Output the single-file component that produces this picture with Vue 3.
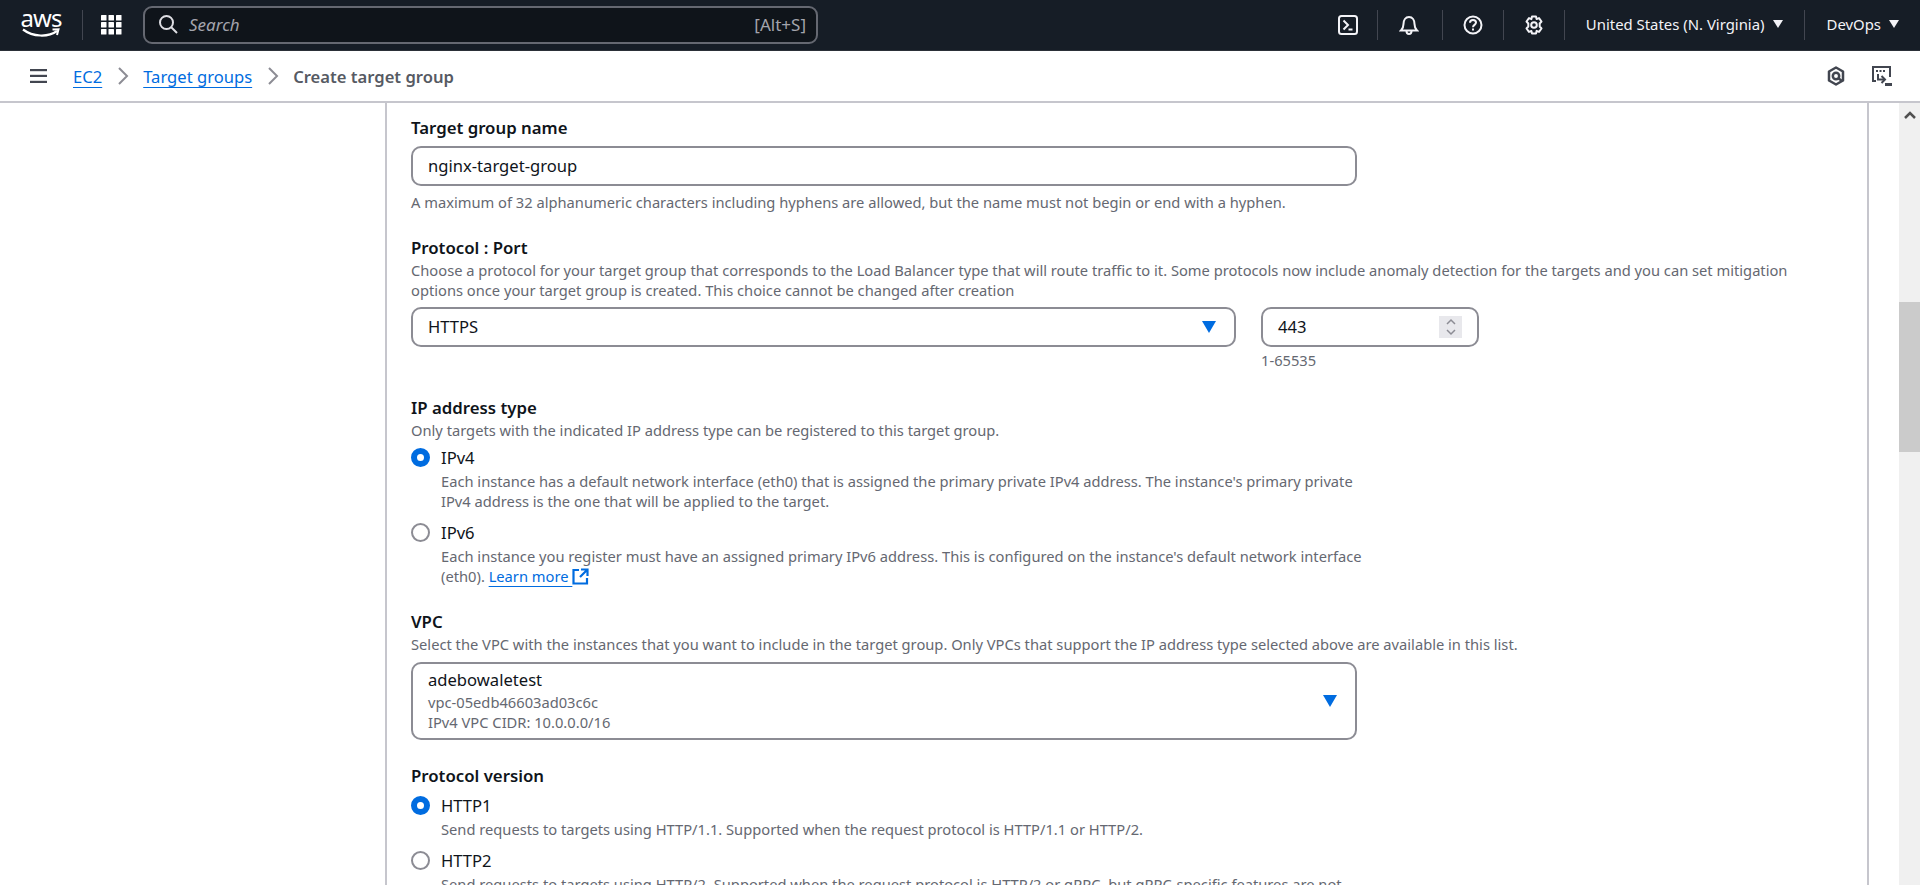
<template>
  <div class="page">
    <header class="topbar">
      <div class="logo">
        <span class="logo-text">aws</span>
        <svg class="smile" width="38" height="10" viewBox="0 0 38 10"><path d="M1 1.500C11 9 26 9.500 35 3" fill="none" stroke="#fff" stroke-width="2.200"/><path d="M30.500 1.500L36.500 1.200L35 7" fill="none" stroke="#fff" stroke-width="2"/></svg>
      </div>
      <span class="sep logo-sep"></span>
      <svg class="grid-icon" width="21" height="20" viewBox="0 0 21 20" fill="#fff">
        <template v-for="y in [0, 7, 14]" :key="y">
          <rect v-for="x in [0, 7.5, 15]" :key="x" :x="x" :y="y" width="5.500" height="5.500" rx=".5" />
        </template>
      </svg>
      <div class="search">
        <svg width="20" height="20" viewBox="0 0 20 20" fill="none" stroke="#dedee3" stroke-width="2"><circle cx="8.500" cy="8.500" r="6.500"/><path d="M13 13l6 6"/></svg>
        <span class="search-ph">Search</span>
        <span class="search-key">[Alt+S]</span>
      </div>
      <div class="top-right">
        <svg class="ti" width="20" height="20" viewBox="0 0 20 20" fill="none" stroke="#f3f3f7" stroke-width="2"><rect x="1" y="1" width="18" height="18" rx="2.500"/><path d="M5.500 5.500l4.500 4.500-4.500 4.500M10.500 14.500h4"/></svg>
        <span class="sep sep-first"></span>
        <svg class="ti" width="20" height="20" viewBox="0 0 20 20" fill="none" stroke="#f3f3f7" stroke-width="2"><path d="M2 15.500h16c-2-2-2.500-3.500-2.500-6.500 0-4-2-7-5.500-7S4.500 5 4.500 9c0 3-.5 4.500-2.500 6.500z"/><path d="M7.500 16c0 2 1 3 2.500 3s2.500-1 2.500-3"/></svg>
        <span class="sep sep-second"></span>
        <svg class="ti" width="20" height="20" viewBox="0 0 20 20" fill="none" stroke="#f3f3f7" stroke-width="2"><circle cx="10" cy="10" r="8.500"/><path d="M7 7.700C7 5.800 8.400 5 10 5s3 1 3 2.600c0 2.200-3 2.400-3 4.600"/><path d="M10 13.500v2"/></svg>
        <span class="sep"></span>
        <svg class="ti" width="20" height="20" viewBox="0 0 20 20" fill="none" stroke="#f3f3f7" stroke-width="2"><circle cx="10" cy="10" r="2.800"/><path d="M8 1.500h4l.6 2.600 2.400-1 2.500 3.400-1.800 2 0 3 1.800 2-2.500 3.400-2.400-1-.6 2.600H8l-.6-2.600-2.400 1-2.500-3.400 1.800-2 0-3-1.800-2L5 3.100l2.400 1z" stroke-linejoin="round"/></svg>
        <span class="sep"></span>
        <span class="menu">United States (N. Virginia)<i class="caret"></i></span>
        <span class="sep sep-last"></span>
        <span class="menu">DevOps<i class="caret"></i></span>
      </div>
    </header>

    <nav class="crumbs">
      <svg class="burger" width="17" height="14" viewBox="0 0 17 14" fill="#424650"><rect width="17" height="2.200"/><rect y="5.800" width="17" height="2.200"/><rect y="11.800" width="17" height="2.200"/></svg>
      <a class="link">EC2</a>
      <svg class="chev" width="12" height="18" viewBox="0 0 12 18" fill="none" stroke="#8c8c94" stroke-width="2"><path d="M2 1l8 8-8 8"/></svg>
      <a class="link">Target groups</a>
      <svg class="chev" width="12" height="18" viewBox="0 0 12 18" fill="none" stroke="#8c8c94" stroke-width="2"><path d="M2 1l8 8-8 8"/></svg>
      <span class="current">Create target group</span>
      <div class="crumb-tools">
        <svg width="18" height="20" viewBox="0 0 18 20" fill="none" stroke="#424650" stroke-width="2.500"><path d="M9 1.500l7 4v9l-7 4-7-4v-9z" stroke-linejoin="round"/><circle cx="9" cy="10" r="3.200"/><path d="M11 12l4 3"/></svg>
        <svg width="20" height="20" viewBox="0 0 20 20" fill="none" stroke="#424650" stroke-width="2"><path d="M4 15H1V1h17v10"/><path d="M4 5h2M7.500 5h2M11 5h2" stroke-width="2"/><path d="M6 8v5.500h6"/><path d="M9.500 10l3.500 3.500L9.500 17"/><path d="M13 18.500h7" stroke-width="3"/></svg>
      </div>
    </nav>

    <div class="body">
      <main class="scroller">
        <section class="panel">
          <div class="field name-field">
            <label class="lbl">Target group name</label>
            <div class="input wide">nginx-target-group</div>
            <p class="hint">A maximum of 32 alphanumeric characters including hyphens are allowed, but the name must not begin or end with a hyphen.</p>
          </div>

          <div class="field port-field">
            <label class="lbl">Protocol : Port</label>
            <p class="hint">Choose a protocol for your target group that corresponds to the Load Balancer type that will route traffic to it. Some protocols now include anomaly detection for the targets and you can set mitigation<br>options once your target group is created. This choice cannot be changed after creation</p>
            <div class="proto-row">
              <div class="input select proto">HTTPS<i class="blue-caret"></i></div>
              <div class="port-col">
                <div class="input port">443
                  <span class="spin"><svg width="10" height="18" viewBox="0 0 10 18" fill="none" stroke="#8c8c94" stroke-width="1.500"><path d="M1 6l4-4 4 4M1 12l4 4 4-4"/></svg></span>
                </div>
                <p class="hint range">1-65535</p>
              </div>
            </div>
          </div>

          <div class="field ip-field">
            <label class="lbl">IP address type</label>
            <p class="hint">Only targets with the indicated IP address type can be registered to this target group.</p>
            <div class="radio">
              <i class="dot on"></i>
              <div>
                <div class="radio-lbl">IPv4</div>
                <p class="hint">Each instance has a default network interface (eth0) that is assigned the primary private IPv4 address. The instance's primary private<br>IPv4 address is the one that will be applied to the target.</p>
              </div>
            </div>
            <div class="radio">
              <i class="dot"></i>
              <div>
                <div class="radio-lbl">IPv6</div>
                <p class="hint">Each instance you register must have an assigned primary IPv6 address. This is configured on the instance's default network interface<br>(eth0). <a class="link learn">Learn more <svg width="17" height="17" viewBox="0 0 17 17" fill="none" stroke="#006ce0" stroke-width="2.200"><path d="M7 2H1.500v13.500H15V10"/><path d="M9 1.500h6.500V8M15 2L8 9"/></svg></a></p>
              </div>
            </div>
          </div>

          <div class="field vpc-field">
            <label class="lbl">VPC</label>
            <p class="hint">Select the VPC with the instances that you want to include in the target group. Only VPCs that support the IP address type selected above are available in this list.</p>
            <div class="input select wide vpc">
              <div class="vpc-name">adebowaletest</div>
              <div class="hint">vpc-05edb46603ad03c6c</div>
              <div class="hint">IPv4 VPC CIDR: 10.0.0.0/16</div>
              <i class="blue-caret"></i>
            </div>
          </div>

          <div class="field ver-field">
            <label class="lbl">Protocol version</label>
            <div class="radio">
              <i class="dot on"></i>
              <div>
                <div class="radio-lbl">HTTP1</div>
                <p class="hint">Send requests to targets using HTTP/1.1. Supported when the request protocol is HTTP/1.1 or HTTP/2.</p>
              </div>
            </div>
            <div class="radio">
              <i class="dot"></i>
              <div>
                <div class="radio-lbl">HTTP2</div>
                <p class="hint">Send requests to targets using HTTP/2. Supported when the request protocol is HTTP/2 or gRPC, but gRPC-specific features are not</p>
              </div>
            </div>
          </div>
        </section>
      </main>
      <aside class="scrollbar">
        <svg width="12" height="8" viewBox="0 0 12 8" fill="none" stroke="#505050" stroke-width="2.500"><path d="M1 7l5-5 5 5"/></svg>
        <div class="thumb"></div>
      </aside>
    </div>
  </div>
</template>

<script setup>
</script>

<style>
html, body {
  margin: 0;
  overflow: hidden;
}
</style>

<style scoped>
.page {
  height: 885px;
  display: flex;
  flex-direction: column;
  font-family: "Noto Sans", sans-serif;
  color: #0f141a;
  background: #fff;
  overflow: hidden;
}

.topbar {
  height: 50px;
  flex: none;
  display: flex;
  align-items: center;
  background: #161d26;
  color: #f3f3f7;
  border-bottom: 1px solid #2b3038;
  padding-left: 21px;
}

.logo {
  width: 40px;
  height: 38px;
  display: flex;
  flex-direction: column;
  align-items: center;
  color: #fff;
}

.logo-text {
  font-size: 24px;
  line-height: 26px;
  letter-spacing: -1px;
  margin-top: -1px;
}

.smile {
  margin-top: -3px;
}

.sep {
  width: 1px;
  height: 30px;
  background: #424650;
  flex: none;
}

.logo-sep {
  margin: 0 18px 0 21px;
}

.grid-icon {
  margin-right: 21px;
}

.search {
  width: 675px;
  height: 38px;
  box-sizing: border-box;
  border: 2px solid #656871;
  border-radius: 9px;
  background: #0f141a;
  display: flex;
  align-items: center;
  padding: 0 10px 2px 13px;
  font-size: 17px;
  color: #a4a4ad;
}

.search-ph {
  font-style: italic;
  margin-left: 11px;
}

.search-key {
  margin-left: auto;
}

.top-right {
  margin-left: auto;
  display: flex;
  align-items: center;
  padding-right: 21px;
}

.top-right .sep {
  margin: 0 21px;
}

.top-right .sep-first {
  margin: 0 22px 0 20px;
}

.top-right .sep-second {
  margin: 0 21px 0 24px;
}

.top-right .sep-last {
  margin: 0 22px 0 21px;
}

.ti {
  margin: 0 -1px;
}

.menu {
  font-size: 14.900px;
  white-space: nowrap;
  display: flex;
  align-items: center;
  padding-bottom: 2px;
}

.caret {
  width: 0;
  height: 0;
  margin-left: 8px;
  border-left: 5px solid transparent;
  border-right: 5px solid transparent;
  border-top: 8px solid #f3f3f7;
}

.crumbs {
  height: 52px;
  flex: none;
  box-sizing: border-box;
  display: flex;
  align-items: center;
  border-bottom: 2px solid #c6c6cd;
  padding: 0 30px;
  font-size: 16.600px;
}

.burger {
  margin-right: 26px;
}

.chev {
  margin: 0 14px 0 15px;
}

.link {
  color: #006ce0;
  text-decoration: underline;
  text-underline-offset: 4px;
}

.current {
  color: #565a63;
  font-weight: 600;
}

.crumb-tools {
  margin-left: auto;
  display: flex;
  gap: 27px;
  margin-right: -2px;
}

.body {
  flex: 1;
  display: flex;
  min-height: 0;
}

.scroller {
  flex: 1;
  overflow: hidden;
  padding-left: 385px;
  padding-right: 30px;
}

.panel {
  height: 100%;
  box-sizing: border-box;
  border-left: 2px solid #c6c6cd;
  border-right: 2px solid #c6c6cd;
  padding: 13px 24px 0;
}

.lbl {
  display: block;
  font-size: 16.800px;
  font-weight: 600;
  line-height: 24px;
}

.hint {
  margin: 0;
  font-size: 14.700px;
  line-height: 20px;
  color: #656871;
  white-space: nowrap;
}

.field {
  margin-bottom: 24px;
}

.port-field {
  margin-bottom: 26px;
}

.input {
  box-sizing: border-box;
  height: 40px;
  border: 2px solid #8c8c94;
  border-radius: 10px;
  font-size: 16.600px;
  padding: 0 15px 2px;
  display: flex;
  align-items: center;
  position: relative;
}

.wide {
  width: 946px;
}

.name-field .input {
  margin: 6px 0 6px;
}

.proto-row {
  display: flex;
  gap: 25px;
  margin-top: 7px;
}

.proto {
  width: 825px;
}

.port-col {
  width: 218px;
}

.port {
  padding-left: 15px;
}

.range {
  margin-top: 3px;
}

.blue-caret {
  position: absolute;
  right: 18px;
  top: 50%;
  margin-top: -6px;
  border-left: 7px solid transparent;
  border-right: 7px solid transparent;
  border-top: 12px solid #006ce0;
}

.spin {
  position: absolute;
  right: 15px;
  top: 7px;
  width: 23px;
  height: 22px;
  background: #e8e8ec;
  display: flex;
  align-items: center;
  justify-content: center;
}

.radio {
  display: flex;
  gap: 11px;
  margin-top: 4px;
}

.radio + .radio {
  margin-top: 8px;
}

.radio-lbl {
  font-size: 16.600px;
  line-height: 27px;
}

.dot {
  width: 19px;
  height: 19px;
  box-sizing: border-box;
  border: 2px solid #8c8c94;
  border-radius: 50%;
  margin-top: 4px;
  flex: none;
}

.dot.on {
  border: 6px solid #006ce0;
}

.learn svg {
  vertical-align: -3px;
}

.vpc {
  height: 78px;
  display: block;
  padding-top: 4px;
  margin-top: 8px;
}

.vpc-name {
  line-height: 24px;
}

.scrollbar {
  width: 21px;
  flex: none;
  background: #f0f0f0;
  display: flex;
  flex-direction: column;
  align-items: center;
  padding-top: 8px;
  box-sizing: border-box;
}

.thumb {
  width: 100%;
  height: 150px;
  margin-top: 183px;
  background: #cbcbcb;
}
</style>
